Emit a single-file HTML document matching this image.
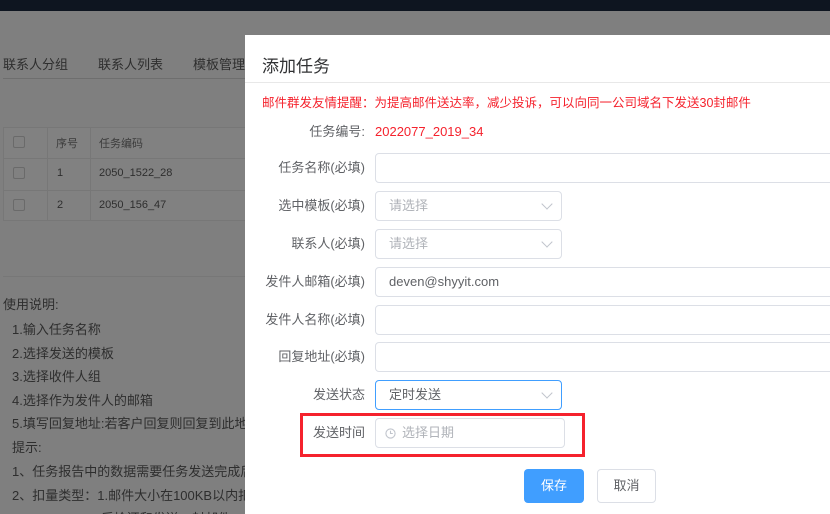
<!DOCTYPE html>
<html><head><meta charset="utf-8"><style>
*{margin:0;padding:0;box-sizing:border-box}
html,body{width:830px;height:514px;overflow:hidden}
body{position:relative;background:#7f7f7f;font-family:"Liberation Sans","Noto Sans CJK SC",sans-serif;font-size:13px;color:#2e2e2e}
.top{position:absolute;left:0;top:0;width:830px;height:11px;background:#0e1520}
.t{position:absolute;white-space:nowrap}
.dlg{position:absolute;left:245px;top:35px;width:585px;height:479px;background:#fff;overflow:hidden}
.lbl{position:absolute;right:465px;color:#606266;font-size:13px;white-space:nowrap;margin-top:-4px}
.inp{position:absolute;left:130px;height:30px;border:1px solid #dcdfe6;border-radius:4px;background:#fff;font-size:13px;color:#606266;padding-left:13px;line-height:28px}
.ph{color:#b0b3b9}
.arr{position:absolute;right:10px;top:8px;width:8px;height:8px;border-right:1px solid #c0c4cc;border-bottom:1px solid #c0c4cc;transform:rotate(45deg)}
</style></head><body>
<div class="top"></div>
<div class="t" style="left:3px;top:54px;font-size:13px">联系人分组</div>
<div class="t" style="left:98px;top:54px">联系人列表</div>
<div class="t" style="left:193px;top:54px">模板管理</div>
<div style="position:absolute;left:3px;top:78px;width:250px;height:1px;background:#6e6e6e"></div>
<div style="position:absolute;left:3px;top:127px;width:250px;height:94px;border:1px solid #777;background:#818181"></div>
<div style="position:absolute;left:3px;top:158px;width:250px;height:1px;background:#777"></div>
<div style="position:absolute;left:3px;top:190px;width:250px;height:1px;background:#777"></div>
<div style="position:absolute;left:47px;top:127px;width:1px;height:94px;background:#777"></div>
<div style="position:absolute;left:90px;top:127px;width:1px;height:94px;background:#777"></div>
<div style="position:absolute;left:13px;top:136px;width:12px;height:12px;border:1px solid #6a6a6a;border-radius:2px"></div>
<div style="position:absolute;left:13px;top:167px;width:12px;height:12px;border:1px solid #6a6a6a;border-radius:2px"></div>
<div style="position:absolute;left:13px;top:199px;width:12px;height:12px;border:1px solid #6a6a6a;border-radius:2px"></div>
<div class="t" style="left:56px;top:135px;font-size:11px;color:#3c3c3c">序号</div>
<div class="t" style="left:99px;top:135px;font-size:11px;color:#3c3c3c">任务编码</div>
<div class="t" style="left:57px;top:167px;font-size:11px">1</div>
<div class="t" style="left:99px;top:167px;font-size:11px">2050_1522_28</div>
<div class="t" style="left:57px;top:199px;font-size:11px">2</div>
<div class="t" style="left:99px;top:199px;font-size:11px">2050_156_47</div>
<div style="position:absolute;left:3px;top:276px;width:250px;height:1px;background:#777"></div>
<div class="t" style="left:3px;top:294px">使用说明:</div>
<div class="t" style="left:12px;top:319px">1.输入任务名称</div>
<div class="t" style="left:12px;top:343px">2.选择发送的模板</div>
<div class="t" style="left:12px;top:366px">3.选择收件人组</div>
<div class="t" style="left:12px;top:390px">4.选择作为发件人的邮箱</div>
<div class="t" style="left:12px;top:413px">5.填写回复地址:若客户回复则回复到此地址</div>
<div class="t" style="left:12px;top:437px">提示:</div>
<div class="t" style="left:12px;top:461px">1、任务报告中的数据需要任务发送完成后三</div>
<div class="t" style="left:12px;top:485px">2、扣量类型：1.邮件大小在100KB以内扣除</div>
<div class="t" style="left:90px;top:508px">2.后检还和发送，封邮件</div>
<div class="dlg">
<div class="t" style="left:17px;top:17px;font-size:17px;color:#303133">添加任务</div>
<div style="position:absolute;left:0;top:47px;width:600px;height:1px;background:#e8e8e8"></div>
<div class="t" style="left:17px;top:57px;color:#f5222d;font-size:12.5px">邮件群发友情提醒：为提高邮件送达率，减少投诉，可以向同一公司域名下发送30封邮件</div>
<div class="lbl" style="top:90px">任务编号:</div>
<div class="t" style="left:130px;top:89px;color:#f5222d">2022077_2019_34</div>
<div class="lbl" style="top:126px">任务名称(必填)</div><div class="inp" style="top:118px;width:480px"></div>
<div class="lbl" style="top:164px">选中模板(必填)</div><div class="inp" style="top:156px;width:187px"><span class="ph">请选择</span><i class="arr"></i></div>
<div class="lbl" style="top:202px">联系人(必填)</div><div class="inp" style="top:194px;width:187px"><span class="ph">请选择</span><i class="arr"></i></div>
<div class="lbl" style="top:240px">发件人邮箱(必填)</div><div class="inp" style="top:232px;width:480px">deven@shyyit.com</div>
<div class="lbl" style="top:278px">发件人名称(必填)</div><div class="inp" style="top:270px;width:480px"></div>
<div class="lbl" style="top:315px">回复地址(必填)</div><div class="inp" style="top:307px;width:480px"></div>
<div class="lbl" style="top:353px">发送状态</div><div class="inp" style="top:345px;width:187px;border-color:#409eff">定时发送<i class="arr"></i></div>
<div style="position:absolute;left:55px;top:378px;width:285px;height:44px;border:3px solid #f5222d"></div>
<div class="lbl" style="top:391px">发送时间</div><div class="inp" style="top:383px;width:190px;padding-left:26px"><span class="ph">选择日期</span>
<svg style="position:absolute;left:9px;top:9px" width="11" height="11" viewBox="0 0 12 12"><circle cx="6" cy="6" r="5" fill="none" stroke="#c0c4cc" stroke-width="1.2"/><path d="M6 3v3h2.5" fill="none" stroke="#c0c4cc" stroke-width="1.2"/></svg></div>
<div style="position:absolute;left:279px;top:434px;width:60px;height:34px;background:#409eff;border-radius:4px;color:#fff;text-align:center;line-height:34px">保存</div>
<div style="position:absolute;left:352px;top:434px;width:59px;height:34px;border:1px solid #dcdfe6;border-radius:4px;color:#606266;text-align:center;line-height:32px">取消</div>
</div>
</body></html>
